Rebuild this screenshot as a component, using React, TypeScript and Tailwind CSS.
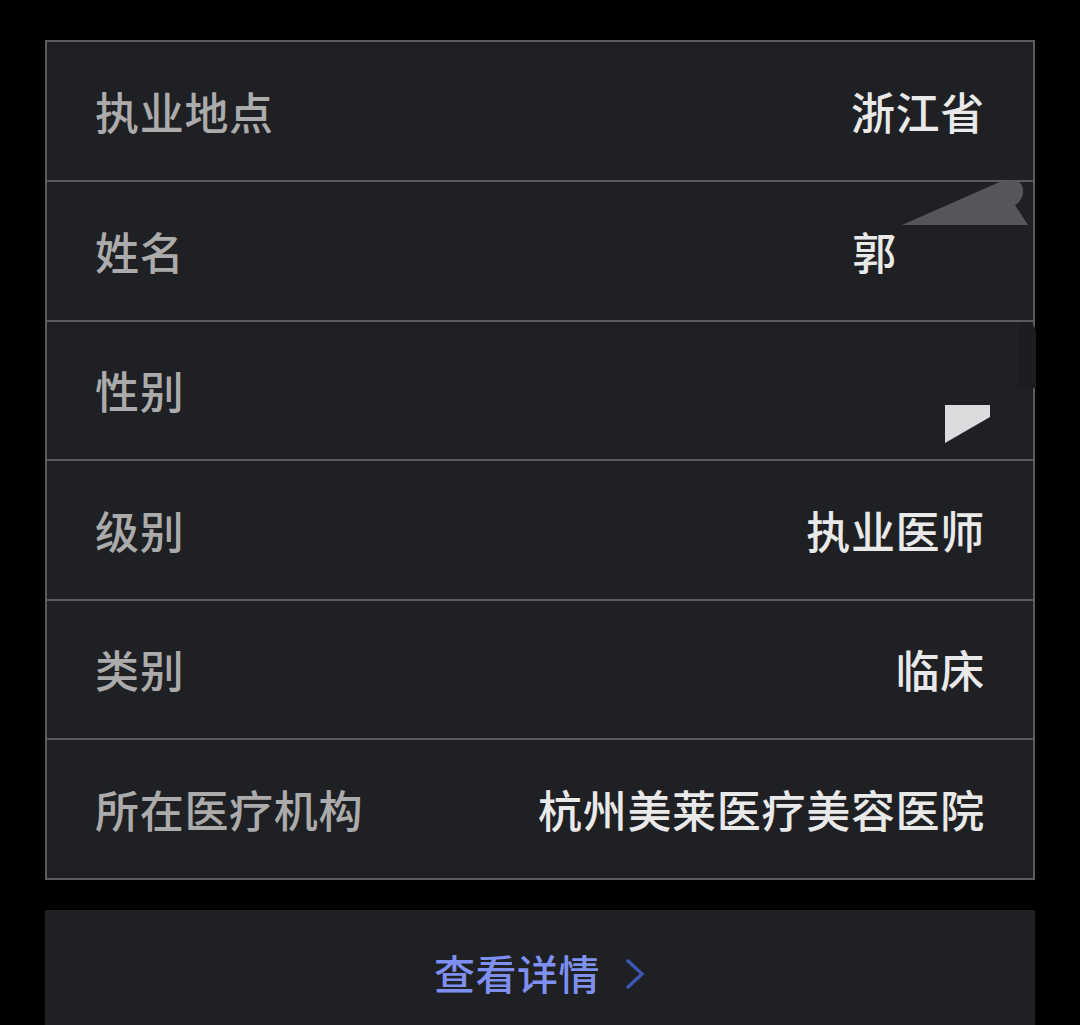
import React from 'react';

const rows = [
  { label: '执业地点', value: '浙江省', pad: '' },
  { label: '姓名', value: '郭', pad: 'pr-[88px]' },
  { label: '性别', value: '', pad: '' },
  { label: '级别', value: '执业医师', pad: '' },
  { label: '类别', value: '临床', pad: '' },
  { label: '所在医疗机构', value: '杭州美莱医疗美容医院', pad: '' },
];

export default function App() {
  return (
    <div
      className="relative w-[1080px] h-[1025px] overflow-hidden bg-black pt-[40px] px-[45px]"
      style={{ fontFamily: '"Noto Sans CJK SC", "Noto Sans", sans-serif' }}
    >
      <div className="w-[990px] border-2 border-[#5b5c5e] bg-[#1f2023]">
        {rows.map((row, i) => (
          <div
            key={row.label}
            className={`flex items-center justify-between px-[48px] ${
              i > 0 ? 'h-[139.5px] border-t-2 border-[#5b5c5e]' : 'h-[138px]'
            }`}
          >
            <span className="text-[44px] font-medium tracking-[0.7px] text-[#ababac] leading-none">{row.label}</span>
            <span className={`text-[44px] font-medium tracking-[0.7px] text-[#e9e9ea] leading-none ${row.pad}`}>
              {row.value}
            </span>
          </div>
        ))}
      </div>

      <div className="mt-[30px] w-[990px] h-[126px] bg-[#1f2023] flex items-center justify-center gap-[24px]">
        <span className="text-[41px] font-medium tracking-[0.5px] text-[#7d8ff0] leading-none">查看详情</span>
        <svg width="22" height="32" viewBox="0 0 22 32" className="mt-[2px]">
          <polyline points="3,2 18,16 3,30" fill="none" stroke="#3d55b3" strokeWidth="3.5" />
        </svg>
      </div>

      {/* redaction marks drawn over the screenshot */}
      <svg className="pointer-events-none absolute left-0 top-0" width="1080" height="1025">
        <path d="M902 225 L995 184 Q1003 180 1016 181 Q1024 183 1023 194 Q1021 202 1015 205 L1028 225 Z" fill="#55565a" />
        <path d="M945 405 L990 405 L990 417 L945 443 Z" fill="#dcdcde" />
        <path d="M1018 322 L1028 322 Q1036 324 1036 334 L1036 388 L1018 388 Z" fill="#1c1d20" />
      </svg>
    </div>
  );
}
